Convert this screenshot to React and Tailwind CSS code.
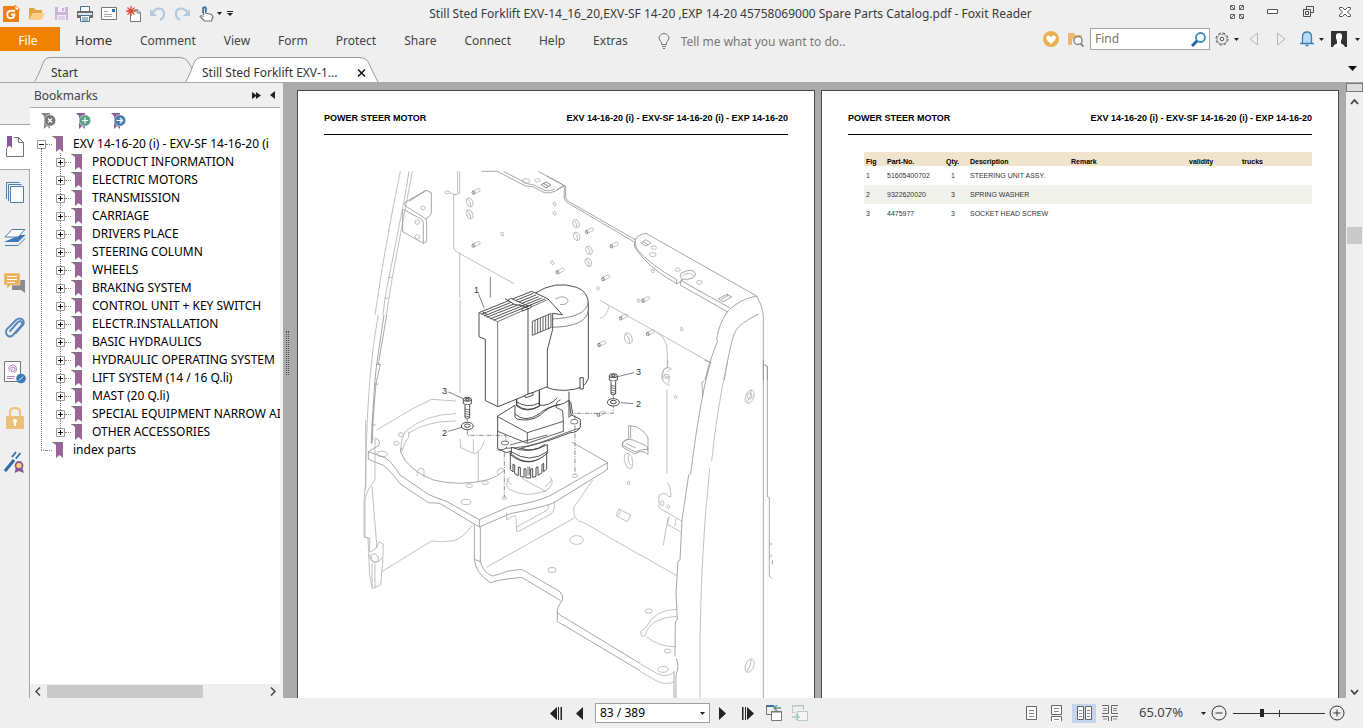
import React from "react";

const UI = "font-['Noto_Sans',sans-serif]";

const Icon = ({ w = 16, h = 16, children, className = "" }) => (
  <svg width={w} height={h} viewBox={`0 0 ${w} ${h}`} fill="none" className={`block shrink-0 ${className}`} aria-hidden="true">
    {children}
  </svg>
);

const Btn = ({ label, className = "", children }) => (
  <button type="button" aria-label={label} className={`flex shrink-0 items-center justify-center ${className}`}>
    {children}
  </button>
);

const Caret = ({ className = "" }) => (
  <Icon w={5} h={3} className={className}><path d="M0 0h5L2.500 3z" fill="#222" /></Icon>
);

/* ---------- Title bar ---------- */

function QuickAccess() {
  return (
    <div className="flex items-center pl-[3px]">
      <Btn label="Foxit Reader" className="mr-[9px]">
        <Icon w={17} h={17}>
          <path d="M0 1h12l4 4v12H0z" fill="#f08010" />
          <path d="M12 0v5h5z" fill="#fff" stroke="#f08010" />
          <path d="M12 6Q4.500 4.500 4.200 9.500 4.500 13.500 8 13.200q3.500-.2 3.500-3.700H8" stroke="#fff" strokeWidth="1.800" />
        </Icon>
      </Btn>
      <Btn label="Open" className="mr-[9px]">
        <Icon>
          <path d="M0 14V2h5l2 2h6v3H4z" fill="#e0a44b" />
          <path d="M4 7h12l-3.500 7H0z" fill="#f8cf85" />
        </Icon>
      </Btn>
      <Btn label="Save" className="mr-[8px]">
        <Icon w={15} h={15}>
          <path d="M1 1h13v13H1z" fill="#c9b4da" />
          <path d="M4 1h7v5H4z" fill="#f3edf7" /><path d="M8 2h2v3H8z" fill="#c9b4da" />
          <path d="M3 9h9v5H3z" fill="#f3edf7" /><path d="M4 11h7M4 13h7" stroke="#c9b4da" />
        </Icon>
      </Btn>
      <Btn label="Print" className="mr-[8px]">
        <Icon w={16} h={16}>
          <path d="M3.500.500h9v5h-9z" fill="#fff" stroke="#4b7391" />
          <path d="M0 5h16v7H0z" fill="#6b6b6b" /><path d="M1 8h14" stroke="#dce9f2" strokeWidth="2" />
          <path d="M3.500 9.500h9v6h-9z" fill="#fff" stroke="#4b7391" /><path d="M5 12h6M5 14h6" stroke="#4b7391" />
        </Icon>
      </Btn>
      <Btn label="Email" className="mr-[9px]">
        <Icon w={16} h={13}>
          <path d="M.500.500h15v12H.500z" fill="#fff" stroke="#777" />
          <path d="M11 2h3v3h-3z" fill="#3973a8" /><path d="M3 4.500h4M3 7.500h8M3 9.500h8" stroke="#aaa" />
        </Icon>
      </Btn>
      <Btn label="New document" className="mr-[9px]">
        <Icon w={15} h={16}>
          <path d="M4.500 7v8.500h10V7l-3-3H8" fill="#fff" stroke="#777" /><path d="M11 3v4h4" stroke="#777" />
          <path d="M5 0v10M0 5h10M1.500 1.500l7 7M8.500 1.500l-7 7" stroke="#dc4a38" strokeWidth="1.300" />
        </Icon>
      </Btn>
      <Btn label="Undo" className="mr-[8px]">
        <Icon w={16} h={15}>
          <path d="M2 7C6 1 14 1 14 8q0 4-4 6" stroke="#b4c9dc" strokeWidth="2.200" /><path d="M0 3v7h7z" fill="#b4c9dc" />
        </Icon>
      </Btn>
      <Btn label="Redo" className="mr-[9px]">
        <Icon w={16} h={15}>
          <path d="M14 7C10 1 2 1 2 8q0 4 4 6" stroke="#b4c9dc" strokeWidth="2.200" /><path d="M16 3v7H9z" fill="#b4c9dc" />
        </Icon>
      </Btn>
      <Btn label="Hand tool" className="mr-[3px]">
        <Icon w={15} h={16}>
          <path d="M4.500 9V2.500q1-1.500 2 0V7l6 1.500 1.500 2-1.500 4.500h-7L1 10.500q1-1.500 3.500 0" fill="#fff" stroke="#777" strokeWidth="1.200" />
          <path d="M4 7V2q1.500-2 3 0v4" stroke="#3a76ad" strokeWidth="1.600" />
        </Icon>
      </Btn>
      <Btn label="Tool options" className="mr-[5px]"><Caret /></Btn>
      <Btn label="Customize toolbar"><Icon w={6} h={6}><path d="M0 .500h6" stroke="#222" /><path d="M0 2h6L3 5z" fill="#222" /></Icon></Btn>
    </div>
  );
}

function TitleBar() {
  return (
    <header className="relative flex h-[27px] items-center justify-between">
      <QuickAccess />
      <h1 className="absolute inset-x-0 left-[98px] text-center text-[12px] leading-4 text-[#3a3a3a]">
        Still Sted Forklift EXV-14_16_20,EXV-SF 14-20 ,EXP 14-20 45758069000 Spare Parts Catalog.pdf - Foxit Reader
      </h1>
      <div className="relative flex items-center pb-[4px]">
        <Btn label="Full screen" className="mr-[23px]">
          <Icon w={14} h={14}>
            <path d="M.500.500h4v4h-4zM9.500.500h4v4h-4zM.500 9.500h4v4h-4zM9.500 9.500h4v4h-4z" stroke="#666" />
            <path d="M1 1l4 4M13 1L9 5M1 13l4-4M13 13L9 9" stroke="#666" />
          </Icon>
        </Btn>
        <Btn label="Minimize" className="mr-[25px]"><Icon w={11} h={5}><path d="M.500.500h10v4H.500z" fill="#fff" stroke="#555" /></Icon></Btn>
        <Btn label="Restore" className="mr-[25px]">
          <Icon w={11} h={11}><path d="M3.500 3V.500h7v6H8M.500 3.500h7v7h-7zM2.500 5.500h3v3h-3z" stroke="#4d4d4d" /></Icon>
        </Btn>
        <Btn label="Close" className="mr-[12px]">
          <Icon w={12} h={10}><path d="M.500.500h3L6 3 8.500.500h3V2L8.500 5l3 3v1.500h-3L6 7 3.500 9.500h-3V8l3-3-3-3z" fill="#fff" stroke="#555" /></Icon>
        </Btn>
      </div>
    </header>
  );
}

/* ---------- Ribbon menu ---------- */

const MENU = ["Comment", "View", "Form", "Protect", "Share", "Connect", "Help", "Extras"];

function MenuBar() {
  return (
    <nav className="flex h-[24px] items-center justify-between" aria-label="Ribbon">
      <div className="flex h-full items-center text-[12px] text-[#444]">
        <button type="button" className="h-full w-[60px] bg-[#f08200] pr-[4px] pt-[4px] text-white">File</button>
        <div className="flex items-center pt-[4px]">
          <button type="button" className="ml-[15px] mr-[28px] text-[13px] text-[#333]">Home</button>
          <div className="flex gap-[28px]">
            {MENU.map((m) => <button key={m} type="button">{m}</button>)}
          </div>
          <label htmlFor="tell" className="ml-[30px] mr-[11px]">
            <span className="sr-only">Tell me what you want to do</span>
            <Icon w={12} h={16}>
              <path d="M3.500 11.500v-2q-5-5 0-8.500 2.500-1 5 0 5 3.500 0 8.500v2z" stroke="#777" /><path d="M4 13.500h4M5 15.500h2" stroke="#777" />
            </Icon>
          </label>
          <input id="tell" placeholder="Tell me what you want to do.." className="h-[20px] w-[260px] bg-transparent placeholder:text-[#777] placeholder:opacity-100" />
        </div>
      </div>
      <div className="flex items-center pr-[3px]">
        <Btn label="Favorites" className="mr-[9px]">
          <Icon w={16} h={16}>
            <circle cx="8" cy="8" r="8" fill="#e9b04f" /><path d="M8 13L3.500 8.500Q3 4 6 4.500L8 6q4-4 5 1L12 9z" fill="#fff" />
          </Icon>
        </Btn>
        <Btn label="Search folder" className="mr-[6px]">
          <Icon w={16} h={15}>
            <path d="M0 13V1h6l1 2h7v4H4v6z" fill="#e9b873" /><circle cx="10" cy="8.500" r="4" fill="#fff" stroke="#888" strokeWidth="1.500" /><path d="M12.500 11.500l3 3" stroke="#888" strokeWidth="2" />
          </Icon>
        </Btn>
        <form className="mr-[5px] flex h-[22px] w-[120px] items-center border border-[#a5a5a5] bg-white pr-[3px]">
          <input aria-label="Find" placeholder="Find" className="min-w-0 flex-1 pl-[4px] text-[12px] placeholder:text-[#777] placeholder:opacity-100" />
          <Btn label="Search">
            <Icon w={15} h={15}><circle cx="9.500" cy="5.500" r="4.500" stroke="#3c8bc0" strokeWidth="1.800" /><path d="M6 9l-5 5" stroke="#1e5f9e" strokeWidth="2.800" /></Icon>
          </Btn>
        </form>
        <Btn label="Settings" className="mr-[5px]">
          <Icon w={14} h={14}><circle cx="7" cy="7" r="6" stroke="#555" strokeDasharray="2.700 2" /><circle cx="7" cy="7" r="5" stroke="#777" strokeWidth=".8" /><circle cx="7" cy="7" r="1.800" stroke="#555" /></Icon>
        </Btn>
        <Btn label="Settings menu" className="mr-[10px]"><Caret /></Btn>
        <Btn label="Previous result" className="mr-[19px]"><Icon w={9} h={14}><path d="M8.500 1v12L1 7z" stroke="#b5b5b5" /></Icon></Btn>
        <Btn label="Next result" className="mr-[14px]"><Icon w={9} h={14}><path d="M.500 1v12L8 7z" stroke="#b5b5b5" /></Icon></Btn>
        <Btn label="Notifications" className="mr-[5px]">
          <Icon w={14} h={16}><path d="M2.500 12V6q0-5 4.500-5t4.500 5v6" fill="#b7dcf5" stroke="#3f7fb8" strokeWidth="1.300" /><path d="M0 12.500h14M5.500 14.500h3" stroke="#3f7fb8" strokeWidth="1.500" /></Icon>
        </Btn>
        <Btn label="Notification menu" className="mr-[7px]"><Caret /></Btn>
        <Btn label="Account" className="mr-[8px]">
          <Icon w={16} h={16}><path d="M0 0h16v16H0z" fill="#333" /><path d="M2 16q1-3 4-3.500V10Q3 2 8 2t2 8v2.500q3 .500 4 3.500z" fill="#fff" /></Icon>
        </Btn>
        <Btn label="Account menu"><Caret /></Btn>
      </div>
    </nav>
  );
}

function TabStrip() {
  return (
    <div className="mt-[7px] flex h-[25px] items-end justify-between border-b border-[#a8a8a8] pl-[34px]">
      <div className="flex h-[25px] text-[12px] text-[#333]" role="tablist">
        <button type="button" role="tab" aria-selected="false" className="relative h-full w-[151px] pl-[17px] pt-[6px] text-left">
          <svg className="absolute left-0 top-0" width="160" height="25" fill="none" aria-hidden="true">
            <path d="M.500 24.500C4 20 8 8 10 4q2-3.500 6-3.500H146q5 0 8 4l5 9" stroke="#999" />
          </svg>
          <span className="relative">Start</span>
        </button>
        <button type="button" role="tab" aria-selected="true" className="relative h-full w-[193px] pl-[17px] pt-[6px] text-left">
          <svg className="absolute left-0 top-0" width="194" height="25" aria-hidden="true">
            <path d="M.500 25C4 20 8 8 10 4q2-3.500 6-3.500H175q5 0 8 4 5 11 10 20.500" fill="#fff" stroke="#999" />
          </svg>
          <span className="relative">Still Sted Forklift EXV-1...</span>
          <svg className="absolute right-[12px] top-[12px]" width="9" height="8" aria-hidden="true"><path d="M1 .500l7 7M8 .500l-7 7" stroke="#111" strokeWidth="1.500" /></svg>
        </button>
      </div>
      <Btn label="Tab list" className="mb-[11px] mr-[6px]"><Icon w={9} h={5}><path d="M0 0h9L4.500 5z" fill="#111" /></Icon></Btn>
    </div>
  );
}

/* ---------- Navigation pane ---------- */

const SIDE = [
  ["Bookmarks panel", <Icon key="a" w={18} h={22}><path d="M8 1.500h4.500l5 5v14H.500V12" fill="#fff" stroke="#777" /><path d="M12.500 1.500v5h5" stroke="#777" /><path d="M1 0h5v12l-2.500-2.500L1 12z" fill="#8a569b" /></Icon>],
  ["Pages panel", <Icon key="b" w={18} h={22}><path d="M.500 17V.500h13M2.500 19V2.500h13" stroke="#4c7fad" /><path d="M4.500 4.500h13v16h-13z" fill="#fff" stroke="#4c7fad" /></Icon>],
  ["Layers panel", <Icon key="c" w={22} h={20}><path d="M1 17.500h13l7-7" stroke="#4c7fad" /><path d="M0 14h14l7.500-7H16z" fill="#3b79b5" /><path d="M8 1.500h13l-7 7.500H1z" fill="#fff" stroke="#4c7fad" /></Icon>],
  ["Comments panel", <Icon key="d" w={21} h={21}><path d="M8 8h13v13l-4-3H8z" fill="#8b8b8b" /><path d="M0 1h16v12H7l-4 4v-4H0z" fill="#ecb157" stroke="#efefef" strokeWidth=".5" /><path d="M3 4.500h10M3 7.500h10M3 10.500h8" stroke="#fff" /></Icon>],
  ["Attachments panel", <Icon key="e" w={20} h={22}><path d="M5 14l8-9q3-2 4 1 .500 1-1 3l-8 9q-3 3-6 0-2-3 0-6l9-9q4-3 7 0 2 3-1 6l-6 7" stroke="#5687bb" strokeWidth="1.900" strokeLinecap="round" /></Icon>],
  ["Signatures panel", <Icon key="f" w={22} h={23}><path d="M.500.500h16v20H.500z" fill="#fff" stroke="#777" /><path d="M4 8q1-4 5-4 3.500 0 3.500 4 0 3-2.500 4M5 10q1-4 4-4 2 0 2 2.500 0 2-2.500 2T7 9.500 9 8M3 15.500h8M3 17.500h7" stroke="#9a6aab" strokeWidth=".8" /><circle cx="17" cy="17.500" r="4.800" fill="#3b79b5" /><path d="M15 19.500l4-4" stroke="#fff" /></Icon>],
  ["Security panel", <Icon key="g" w={18} h={22}><path d="M4 10V5q0-4 5-4t5 4v5" stroke="#ecc07c" strokeWidth="2" /><path d="M0 9h18v13H0z" fill="#ecc07c" /><circle cx="9" cy="14" r="2" fill="#fff" /><path d="M9 14v5" stroke="#fff" strokeWidth="2" /></Icon>],
  ["Digital ID panel", <Icon key="h" w={21} h={23}><path d="M1 20l9-11" stroke="#2c6aad" strokeWidth="3" /><path d="M11.500 8l5-6M8 6l4-5" stroke="#2c6aad" strokeWidth="1.800" /><path d="M9 6l5 4" stroke="#efefef" /><path d="M12 16l-1.500 6 4.500-2 5 2-2-6" fill="#8a569b" /><circle cx="15" cy="14.500" r="3.500" fill="#ffd56b" stroke="#8a569b" strokeWidth="1.800" /></Icon>],
];

const Ribbon = () => (
  <Icon w={12} h={16}><path d="M0 0h11v16l-3.500-3L4 16V3z" fill="#9a6698" /><path d="M0 0h10v1H1z" fill="#777" /></Icon>
);

const TREE = [
  "PRODUCT INFORMATION", "ELECTRIC MOTORS", "TRANSMISSION", "CARRIAGE", "DRIVERS PLACE", "STEERING COLUMN",
  "WHEELS", "BRAKING SYSTEM", "CONTROL UNIT + KEY SWITCH", "ELECTR.INSTALLATION", "BASIC HYDRAULICS",
  "HYDRAULIC OPERATING SYSTEM", "LIFT SYSTEM (14 / 16 Q.li)", "MAST (20 Q.li)",
  "SPECIAL EQUIPMENT NARROW AI", "OTHER ACCESSORIES",
];

function TreeRow({ label, state }) {
  return (
    <div className="flex h-[18px] items-center">
      {state === "leaf" ? (
        <span className="ml-[4px] w-[5px] shrink-0 border-t border-dotted border-[#888]" />
      ) : (
        <Btn label={`${state === "open" ? "Collapse" : "Expand"} ${label}`} className="bg-white">
          <Icon w={9} h={9}>
            <path d="M.500.500h8v8h-8z" fill="#fff" stroke="#999" />
            <path d={state === "open" ? "M2 4.500h5" : "M2 4.500h5M4.500 2v5"} stroke="#111" />
          </Icon>
        </Btn>
      )}
      <span className="w-[6px] shrink-0 border-t border-dotted border-[#888]" />
      <Ribbon />
      <a href="#" className="ml-[9px] whitespace-nowrap">{label}</a>
    </div>
  );
}

function BookmarkTool({ color, badge, sign, label }) {
  return (
    <Btn label={label}>
      <Icon w={15} h={16}>
        <path d="M0 0h9v16l-3-3-3 3V3z" fill={color} />
        <circle cx="9" cy="7.500" r="5.800" fill={badge} stroke="#fff" strokeWidth=".6" />
        <path d={sign} stroke="#fff" strokeWidth="1.200" />
      </Icon>
    </Btn>
  );
}

function Sidebar() {
  return (
    <aside className="flex w-[283px] shrink-0 bg-[#efefef]">
      <div className="flex w-[30px] shrink-0 flex-col">
        <div className="h-[41px] border-r border-[#efefef]" />
        {SIDE.map(([label, icon], i) => (
          <button
            key={label}
            type="button"
            aria-label={label}
            className={i === 0
              ? "flex h-[46px] items-center justify-center border-y border-[#a8a8a8] bg-white"
              : "flex h-[45px] items-center justify-center border-r border-[#a8a8a8]"}
          >
            {icon}
          </button>
        ))}
        <div className="flex-1 border-r border-[#a8a8a8]" />
      </div>
      <div className="flex w-[250px] flex-col">
        <div className="flex h-[24px] shrink-0 items-center pl-[4px] pr-[5px] text-[12px] text-[#444]">
          <h2 className="flex-1 pt-px">Bookmarks</h2>
          <Btn label="Expand panel" className="mr-[9px]"><Icon w={9} h={7}><path d="M0 0l5 3.500L0 7zM4 0l5 3.500L4 7z" fill="#222" /></Icon></Btn>
          <Btn label="Hide panel"><Icon w={5} h={8}><path d="M5 0v8L0 4z" fill="#222" /></Icon></Btn>
        </div>
        <div className="flex min-h-0 flex-1 flex-col border-t border-[#a8a8a8] bg-white">
          <div className="flex gap-[20px] pl-[11px] pt-[5px]">
            <BookmarkTool label="Delete bookmark" color="#888" badge="#777" sign="M7 5.500l4 4M11 5.500l-4 4" />
            <BookmarkTool label="Add bookmark" color="#8a5a9b" badge="#5fa087" sign="M9 4.500v6M6 7.500h6" />
            <BookmarkTool label="Go to bookmark" color="#8a5a9b" badge="#4b7cad" sign="M5.500 7.500h6M9 5l2.500 2.500L9 10" />
          </div>
          <div className="mt-[6px] min-h-0 flex-1 overflow-hidden pl-[7px] text-[12px] text-black">
            <div className="relative">
              <span className="absolute bottom-[9px] left-[4px] top-[13px] border-l border-dotted border-[#777]" />
              <TreeRow label="EXV 14-16-20 (i) - EXV-SF 14-16-20 (i" state="open" />
              <div className="relative pl-[19px]">
                <span className="absolute bottom-[9px] left-[23px] top-0 border-l border-dotted border-[#777]" />
                <div className="relative">
                  {TREE.map((t) => <TreeRow key={t} label={t} state="closed" />)}
                </div>
              </div>
              <TreeRow label="index parts" state="leaf" />
            </div>
          </div>
          <div className="flex h-[14px] shrink-0 items-center bg-[#efefef] pl-[5px] pr-[4px]">
            <Btn label="Scroll left"><Icon w={6} h={9}><path d="M5 .500l-4 4 4 4" stroke="#444" strokeWidth="1.500" /></Icon></Btn>
            <div className="flex-1 pl-[6px]"><div className="h-[13px] w-[156px] bg-[#cacaca]" /></div>
            <Btn label="Scroll right"><Icon w={6} h={9}><path d="M1 .500l4 4-4 4" stroke="#444" strokeWidth="1.500" /></Icon></Btn>
          </div>
        </div>
      </div>
    </aside>
  );
}

/* ---------- Exploded view ---------- */

const Pins = ({ at }) => at.map(([x, y]) => (
  <g key={`${x}-${y}`}>
    <path d={`M${x - 10} ${y + 1}l18-9q6 1 4 8l-17 9z`} />
    <ellipse cx={x - 8} cy={y + 5} rx="4" ry="5" stroke="#666" />
  </g>
));

const Holes = ({ at, rx, ry, r = -20 }) => at.map(([x, y]) => (
  <g key={`${x}-${y}`} transform={`rotate(${r} ${x} ${y})`}>
    <ellipse cx={x} cy={y} rx={rx} ry={ry} />
    {ry > 9 && <path d={`M${x - 3} ${y - ry + 1}q8 ${ry} 2 ${ry * 2 - 3}`} />}
  </g>
));

const Dots = ({ at }) => at.map(([x, y, rx, ry]) => <ellipse key={`${x}-${y}`} cx={x} cy={y} rx={rx} ry={ry} />);

const Screw = ({ x, y }) => (
  <g stroke="#333" strokeWidth="2.600">
    <path d={`M${x - 12} ${y - 5}v13q12 8 24 0v-13`} fill="#fff" />
    <ellipse cx={x} cy={y - 5} rx="12" ry="6" fill="#ddd" />
    <ellipse cx={x} cy={y - 5} rx="5" ry="3" />
    <path d={`M${x - 7} ${y + 12}v38q7 5 14 0v-38`} fill="#fff" />
    <path d={`M${x - 7} ${y + 24}l14 3M${x - 7} ${y + 31}l14 3M${x - 7} ${y + 38}l14 3M${x - 7} ${y + 45}l14 3`} strokeWidth="2" />
    <ellipse cx={x} cy={y + 75} rx="18" ry="11" fill="#fff" />
    <ellipse cx={x} cy={y + 74} rx="9" ry="5" />
    <path d={`M${x} ${y + 53}v10`} strokeWidth="1.500" />
  </g>
);

function ExplodedView() {
  return (
    <svg viewBox="324 170 464 530" className="block w-full" fill="none" stroke="#aaa" strokeWidth="2.200" strokeLinejoin="round" role="img" aria-label="Steering unit exploded view">
      {/* left frame and rear wall */}
      <g transform="translate(290 85) scale(.33333)">
        <path d="M331 259Q285 480 255 690M357 259l-8 50-6 34-46 234-12 64-6 49M367 259l-60 318-10 62-8 51M294 577h13M284 640h12" />
        <path d="M345 352l63-36 16 7v62q-5 12-18 18M345 352v10l57 36q8 5 8 14v58l-10 5-62-35v-64q2-4 7 0l50 27q5 4 5 12v60M408 316l-50 33" stroke="#888" />
        <Dots at={[[399, 369, 6, 6], [382, 411, 7, 7], [382, 456, 7, 7], [472, 322, 8, 4]]} />
        <path d="M503 259v66M509 259v66l-18 5v158q0 8 12 14l169 94M480 324l20 6M509 503v137" />
        <path d="M575 259h47l84 44 22 2 35 18q16 4 34-5l26-16M640 259l72 37 20 4 34 17q14 3 28-5M745 259l75 41" stroke="#888" />
        <Dots at={[[708, 288, 11, 7], [742, 286, 8, 5]]} />
        <path d="M754 299l15-8 14 9-15 9zM761 295l15 9" stroke="#666" />
        <Pins at={[[558, 318], [558, 477]]} />
        <Holes at={[[539, 352], [539, 388]]} rx={9} ry={14} />
        <Holes at={[[637, 447], [787, 533], [794, 357], [794, 385]]} rx={4} ry={6} />
        <path d="M601 575v62M565 626l18 44" stroke="#555" />
      </g>
      {/* upper right panel */}
      <g transform="translate(540 150) scale(.33333)">
        <path d="M20 78l48 26q5 3 5 10v30q2 12 14 17l196 115M50 120l22-15q5 0 5 10v28q2 8 12 13l198 114" stroke="#888" />
        <path d="M287 267q6-12 31-17l332 188M287 265q-6 18 5 34 40 46 118 90v12l14-7v-10q-8-10 3-16 32-16 40 4-4 18-40 16v6l143 80M284 275v16q36 60 126 110M422 392v14l143 81" stroke="#888" />
        <path d="M427 377q20-13 35 1" />
        <path d="M303 279l15-10 14 10-15 9zM309 275l15 9M535 446l26-13 14 8-26 15zM543 449l19-11v-5" stroke="#888" />
        <Dots at={[[342, 293, 8, 5], [338, 314, 10, 6], [413, 359, 8, 5], [478, 397, 8, 6]]} />
        <path d="M650 438q-50 8-88 47-26 40-32 82l3 5-25 68-13 50M650 438l12 25q8 20 8 37v190M655 492q-58 30-68 50-14 24-34 148M670 643l12 6v41" stroke="#888" />
        <path d="M180 451l332 187M207 468q-4 28-27 38M350 546q32 18 32 64v42M372 657q-8 22-2 33M372 657q15-8 22 0-8 0-10 8" />
        <ellipse cx="380" cy="679" rx="9" ry="6" />
        <Pins at={[[148, 241], [222, 284], [60, 362], [197, 382], [317, 447], [250, 500], [331, 547], [185, 580]]} />
        <Holes at={[[108, 221], [110, 259], [147, 301], [145, 337]]} rx={9} ry={13} />
        <Holes at={[[265, 565]]} rx={11} ry={17} />
        <Holes at={[[174, 415], [338, 363], [425, 537], [296, 452]]} rx={4} ry={5} />
      </g>
      {/* left rail, steering motor, fasteners */}
      <g transform="translate(350 270) scale(.33333)">
        <path d="M85 135Q48 330 47 660" />
        <path d="M110 135L85 283h6l-13 58-10 125-2 55M102 135L80 283l-6 58-8 124-2 55M78 283h12M72 342h13M65 465h12" stroke="#888" />
        <path d="M330 90v278M80 480l112-66 53-26 73 5M165 486q60-54 153-55M176 489q55-36 142-36M165 486q-14 24-12 60M176 485v16q-14 18-20 42" />
        <g stroke="#333" strokeWidth="2.600" fill="#fff">
          <path d="M555 70q60-40 125-18 35 14 35 48v225q-8 34-70 36-40 0-55-10" />
          <path d="M715 95q-4 48-110 52M715 120q-4 50-110 52" fill="none" stroke="#777" />
          <path d="M616 87q30-15 38 4 0 14-24 13" fill="none" stroke="#999" />
          <path d="M690 323h10v34h-10z" />
          <path d="M500 380v28q30 24 68 0v-50" />
          <path d="M443 438l52-32v26q30 28 72 0 24-22 62-28 14-2 28-14l6 44 28 14v24q-10 16-30 16l-60 22-132 38-26-12z" />
          <path d="M500 385v20q30 24 68 4v-45M500 395q30 22 68 4M567 405q30 6 55-22M657 365v78M662 395l6 36-10 10M495 432q-3 12 6 15 40 10 70-12 28-28 60-32" fill="none" />
          <path d="M443 440l89 48 108-34-2-32-20-10q0-20 14-22M532 488v30M443 484l89 36 108-36v-30M443 540q24 0 28-10" fill="none" stroke="#444" />
          <path d="M467 535q70-2 125-25 60-24 98-36M480 525l112-30" fill="none" stroke="#555" />
          <ellipse cx="465" cy="519" rx="11" ry="6" strokeWidth="2" />
          <ellipse cx="673" cy="455" rx="11" ry="7" strokeWidth="2" />
          <path d="M484 532v20q54 46 108-2v-26q-54 30-108 8zM484 545q54 38 108 0M515 535q30 15 70-12" />
          <path d="M481 548v50l8 8v-24l5 3v26l11 6v-26l6 2v26l11 3v-26l6 1v27h14v-27l6-1v26l10-3v-26l6-3v26l12-8v-25l5-3v25l9-8v-46q-54 48-109 3z" />
          <path d="M534 590v26M539 590v26" fill="none" strokeWidth="2" />
          <path d="M387 128l158-64 48 22 44 48-29-4v48l-16 62v110l-148 60-38-18V208l-19-8z" />
          <path d="M443 155v255M443 155l150-66M387 128l56 27" stroke="#666" fill="none" />
          <path d="M394 133l156-63M402 138l156-63M410 142l156-62M420 147l155-63M430 151l155-64M398 126l14 8" fill="none" strokeWidth="2.600" />
          <path d="M534 115v258M465 86l30 18 18 2 24 10M472 92l10-7 55 24M515 117l28-12v8l-25 10zM524 376l25-9v9l-22 7z" />
          <path d="M547 154v42M555 150v42M563 147v42M571 144v42M579 140v42M587 137v42M595 134v42M603 131v42M547 154l57-24M547 196l57-24" fill="none" strokeWidth="2.300" />
        </g>
        <Screw x={352} y={393} />
        <Screw x={790} y={322} />
        <path d="M352 480v16h115v20M463 548v135M675 466v150M675 450v-20h115v-22" stroke="#666" strokeDasharray="14 4 3 4" />
        <path d="M295 366l45 20M295 484l40-12M803 320l49-12M812 398l38 3" stroke="#555" />
        <Pins at={[[753, 430]]} />
      </g>
      {/* base plate and lower chassis */}
      <g transform="translate(350 420) scale(.33333)">
        <path d="M75 54q18 6 12 22l-32 19v23l45 18q20 14 50 55l85 57 34 2 119 71 92-40q76-14 128-31l164-101v-22l-107-61M55 95l50 18q20 12 45 52l85 58q20 10 54 21l99 55 92-40q78-12 120-32l172-98M388 299v22" stroke="#888" />
        <path d="M153 98q20 52 97 82 80 20 160 0 32-8 53-30M153 98q-2-6 0-15" stroke="#888" />
        <Dots at={[[97, 102, 15, 8], [153, 44, 8, 6], [139, 70, 8, 6], [348, 246, 15, 8], [358, 197, 9, 6], [406, 188, 9, 6], [463, 234, 7, 4], [675, 168, 8, 5], [680, 360, 20, 13], [606, 450, 12, 8]]} />
        <path d="M480 170q-20 24-2 38 50 28 110 4 30-20 12-42M470 175q10 18 14 20M605 178q-8 18-20 22M516 175l72 40" />
        <path d="M202 168v-16q12-14 20-2v24M443 162v-12q10-10 20-2M331 56v26l39 18q20 2 33-38M385 92v92M370 58v40" />
        <path d="M373 312v106l18 7V322M373 418q4 42 48 70 24-8 50-11 24-2 44-5l117 70M391 425q10 34 36 43 20-4 44-14l44-6 115 67q12 12 7 26-18 24-15 38v26q6 4 20 11l228 136M622 578q10 10 30 20l218 132" stroke="#888" />
        <path d="M409 442l264-148M728 180l-56 82q-4 30 14 41l14 4 170 98" />
        <path d="M470 278v22l20-12q8-4 8 8l2 38q4 2 10-2l93-50q10-8 10-22v-17M500 321l90-50q6-4 6-16" />
        <path d="M367 316q-30 40-57 46-32 6-65 1L95 455M47 0v188l-5 50v112l12 4 5 112 8 40 25-12 6-64 2-58-13-6-10 20-16 10" />
        <path d="M68 0v56l7 4v120l-16 22-10 20-4 20v110l14 2v42M66 200l15 185M66 430v70M75 432v72M58 402q2 25 18 25 16-2 20-14" />
        <ellipse cx="74" cy="414" rx="10" ry="13" transform="rotate(-25 74 414)" />
      </g>
      {/* right upright */}
      <g transform="translate(560 360) scale(.33333)">
        <path d="M452 5l-12 46-6 25q-22 110-34 205l-8 60-6 4-20 135-6 120-6 4-6 95 4 80-6 6-1 105M342 935v80M348 895q12 20 0 50v70M428 112l-2-45 6-4M434 0l14 6" stroke="#888" />
        <path d="M503 0q-34 160-48 303M449 325q-34 320-29 690" />
        <path d="M610 0v1015M615 15l7 5v390l6 3v235l8 8M630 552h7M630 592l6-8M637 600v14" stroke="#888" />
        <Holes at={[[569, 110], [569, 917]]} rx={12} ry={21} r={22} />
        <ellipse cx="569" cy="108" rx="7" ry="9" />
        <path d="M206 197v40l-19 10v14l37 21q24-16 40 2V234q-6-18-36-34zM212 197v38M188 248q10-14 26-10l42 18q8 4 8 14l-6-2q-16 0-32 8l-38-20zM198 250l30 14" stroke="#888" />
        <path d="M193 285q12-12 22 4 6 20 1 35-8 4-16-4-10-16-7-35zM206 283q-6 20 8 34" />
        <path d="M176 447l36 18-10 20-34-18zM183 450l-9 18" />
        <path d="M305 50q4-26 18-28v-22M305 50q0 18 24 26M312 42q4 12 16 8l-2 20M321 88v252M321 366q10 10 12 44M333 410q-10 2-14-8-14-4-22 4v38l70 40M330 470q-8 2-6 24l38 22M326 472q-8 28-16 84M348 476l-4 22" />
        <Dots at={[[206, 369, 4, 5], [347, 111, 4, 4], [307, 430, 5, 8], [325, 440, 4, 5], [266, 753, 11, 6], [323, 873, 10, 6], [309, 928, 16, 9]]} />
        <path d="M240 584l112 64M350 748q-68 2-90 52l-12 10-6 4 2 14h12M350 769q-84 6-94 58M260 830q34 30 86 30M240 911l50 29q32 16 54-6M240 934l50 29q30 14 52 2" />
      </g>
      <g fill="#333" stroke="none" fontSize="9" className="font-['Liberation_Sans',sans-serif]">
        <text x="474" y="293">1</text>
        <text x="442" y="394">3</text>
        <text x="442" y="436">2</text>
        <text x="636" y="375">3</text>
        <text x="636" y="407">2</text>
      </g>
    </svg>
  );
}

/* ---------- Document pages ---------- */

const PARTS = [
  ["1", "51605400702", "1", "STEERING UNIT ASSY."],
  ["2", "9322620020", "3", "SPRING WASHER"],
  ["3", "4475977", "3", "SOCKET HEAD SCREW"],
];

function Page({ children }) {
  return (
    <section className="min-w-0 flex-1 border border-[#4a4a4a] border-b-0 bg-white px-[26px] pt-[21px] font-['Liberation_Sans',sans-serif]">
      <header className="flex justify-between whitespace-nowrap border-b border-black pb-[10px] text-[9px] font-bold leading-[12px] text-black">
        <span>POWER STEER MOTOR</span>
        <span>EXV 14-16-20 (i) - EXV-SF 14-16-20 (i) - EXP 14-16-20</span>
      </header>
      {children}
    </section>
  );
}

function PartsTable() {
  return (
    <div className="pl-[16px] pt-[17px]">
      <table className="w-full table-fixed text-left text-[7px] leading-[8px] text-[#333]">
        <colgroup>
          <col className="w-[21px]" /><col className="w-[59px]" /><col className="w-[24px]" /><col className="w-[101px]" />
          <col className="w-[118px]" /><col className="w-[53px]" /><col />
        </colgroup>
        <thead>
          <tr className="h-[14px] bg-[#f0e4cc] align-bottom text-black">
            {["Fig", "Part-No.", "Qty.", "Description", "Remark", "validity", "trucks"].map((h) => (
              <th key={h} className="pl-[2px] font-bold">{h}</th>
            ))}
          </tr>
        </thead>
        <tbody>
          {PARTS.map((r, i) => (
            <tr key={r[0]} className={i === 1 ? "h-[19px] bg-[#f2f2ec]" : "h-[19px]"}>
              <td className="pl-[2px]">{r[0]}</td>
              <td className="pl-[2px]">{r[1]}</td>
              <td className="pl-[7px]">{r[2]}</td>
              <td className="whitespace-nowrap pl-[2px]">{r[3]}</td>
              <td /><td /><td />
            </tr>
          ))}
        </tbody>
      </table>
    </div>
  );
}

function Viewer() {
  return (
    <main className="flex min-w-0 flex-1 bg-[#ababab]">
      <div className="flex w-[14px] shrink-0 items-center pl-[3px]" aria-hidden="true">
        <div className="mb-[76px] flex h-[44px] gap-px">
          <span className="border-l border-dotted border-[#555]" />
          <span className="border-l border-dotted border-[#555]" />
        </div>
      </div>
      <div className="flex min-w-0 flex-1 gap-[6px] overflow-hidden pr-[7px] pt-[7px]">
        <Page><div className="pt-[35px]"><ExplodedView /></div></Page>
        <Page><PartsTable /></Page>
      </div>
      <div className="flex w-[17px] shrink-0 flex-col items-center bg-[#efefef]">
        <div className="h-[9px] w-full border border-[#777] bg-[#ddd]" />
        <Btn label="Scroll up" className="mt-[7px]"><Icon w={9} h={6}><path d="M1 5l3.500-4L8 5" stroke="#444" strokeWidth="1.800" /></Icon></Btn>
        <div className="w-full flex-1 px-px pt-[122px]"><div className="h-[17px] bg-[#cacaca]" /></div>
        <Btn label="Scroll down" className="mb-[3px]"><Icon w={9} h={6}><path d="M1 1l3.500 4L8 1" stroke="#444" strokeWidth="1.800" /></Icon></Btn>
      </div>
    </main>
  );
}

/* ---------- Status bar ---------- */

function StatusBar() {
  return (
    <footer className="flex h-[30px] shrink-0 items-center">
      <div className="flex-1" />
      <div className="flex items-center pl-[13px]">
        <Btn label="First page" className="mr-[14px]"><Icon w={12} h={13}><path d="M7 0v13L0 6.500zM8 0h1v13H8zM10.500 0h1.500v13h-1.500z" fill="#222" /></Icon></Btn>
        <Btn label="Previous page" className="mr-[12px]"><Icon w={7} h={13}><path d="M7 0v13L0 6.500z" fill="#222" /></Icon></Btn>
        <div className="mr-[9px] flex h-[20px] w-[115px] items-center border border-[#a0a0a0] bg-white pr-[4px]">
          <input aria-label="Page" defaultValue="83 / 389" className="min-w-0 flex-1 pl-[4px] text-[12px] text-black" />
          <Btn label="Page list"><Caret /></Btn>
        </div>
        <Btn label="Next page" className="mr-[16px]"><Icon w={7} h={13}><path d="M0 0v13l7-6.500z" fill="#222" /></Icon></Btn>
        <Btn label="Last page" className="mr-[12px]"><Icon w={12} h={13}><path d="M5 0v13l7-6.500zM0 0h1.500v13H0zM3 0h1v13H3z" fill="#222" /></Icon></Btn>
        <Btn label="Previous view" className="mr-[10px]">
          <Icon w={16} h={16}><path d="M5 9.500H.500v-9H8" stroke="#777" /><path d="M0 1h8" stroke="#3b6fa5" strokeWidth="2" /><path d="M5.500 6.500h10v9h-10z" fill="#fff" stroke="#777" /><path d="M5 7h11" stroke="#777" /><path d="M15 3H9M11 0L8 3l3 3" stroke="#5a9b88" strokeWidth="1.500" /></Icon>
        </Btn>
        <Btn label="Next view">
          <Icon w={16} h={16}><path d="M3 7.500H.500v-7h11V5" stroke="#bbc8c8" /><path d="M0 1h12M5 7h11" stroke="#bbc8c8" /><path d="M5.500 6.500h10v9h-10z" fill="#f4f4f4" stroke="#bbc8c8" /><path d="M0 12h6M4 9l3 3-3 3" stroke="#a9cbc1" strokeWidth="1.500" /></Icon>
        </Btn>
      </div>
      <div className="flex flex-1 items-center justify-end pr-[18px]">
        <Btn label="Single page" className="mr-[8px] h-[20px] w-[17px]">
          <Icon w={11} h={14}><path d="M.500.500h10v13H.500z" fill="#fff" stroke="#666" /><path d="M3 4.500h5M3 7.500h5M3 10.500h5" stroke="#888" /></Icon>
        </Btn>
        <Btn label="Continuous" className="mr-[7px] h-[20px] w-[17px]">
          <Icon w={11} h={16}><path d="M.500.500h10v9H.500zM.500 16v-4.500h10V16" fill="#fff" stroke="#666" /><path d="M3 3.500h5M3 6.500h5M3 14.500h5" stroke="#888" /></Icon>
        </Btn>
        <Btn label="Facing" className="mr-[4px] h-[19px] w-[24px] bg-[#c5d5f0]">
          <Icon w={15} h={14}><path d="M.500.500h6v13h-6zM8.500.500h6v13h-6z" fill="#fff" stroke="#666" /><path d="M2 4.500h3M2 7.500h3M2 10.500h3M10 4.500h3M10 7.500h3M10 10.500h3" stroke="#888" /></Icon>
        </Btn>
        <Btn label="Continuous facing" className="mr-[19px] h-[20px] w-[20px]">
          <Icon w={16} h={16}><path d="M0 .500h6.500v8H0M16 .500H9.500v8H16M0 11.500h6.500V16M16 11.500H9.500V16" stroke="#666" /><path d="M1 3.500h4M1 5.500h4M11 3.500h4M11 5.500h4M1 14h4M11 14h4" stroke="#888" /></Icon>
        </Btn>
        <button type="button" className="mr-[5px] flex w-[67px] items-center justify-between text-[13px] text-[#444]">
          65.07% <Caret />
        </button>
        <Btn label="Zoom out" className="mr-[6px]"><Icon><circle cx="8" cy="8" r="7" stroke="#333" /><path d="M4.500 8h7" stroke="#333" /></Icon></Btn>
        <div className="relative mr-[4px] flex h-[16px] w-[92px] items-center">
          <span className="absolute left-[46px] top-[5px] h-[7px] w-px bg-[#333]" />
          <input
            type="range" aria-label="Zoom" min="0" max="100" defaultValue="31"
            className="relative m-0 h-[16px] w-full appearance-none bg-transparent [&::-webkit-slider-runnable-track]:h-px [&::-webkit-slider-runnable-track]:bg-[#333] [&::-webkit-slider-thumb]:mt-[-4px] [&::-webkit-slider-thumb]:h-[8px] [&::-webkit-slider-thumb]:w-[4px] [&::-webkit-slider-thumb]:appearance-none [&::-webkit-slider-thumb]:bg-[#222]"
          />
        </div>
        <Btn label="Zoom in"><Icon><circle cx="8" cy="8" r="7" stroke="#333" /><path d="M4.500 8h7M8 4.500v7" stroke="#333" /></Icon></Btn>
      </div>
    </footer>
  );
}

export default function App() {
  return (
    <div className={`flex h-screen flex-col overflow-hidden bg-[#efefef] ${UI}`}>
      <TitleBar />
      <MenuBar />
      <TabStrip />
      <div className="flex min-h-0 flex-1">
        <Sidebar />
        <Viewer />
      </div>
      <StatusBar />
    </div>
  );
}
